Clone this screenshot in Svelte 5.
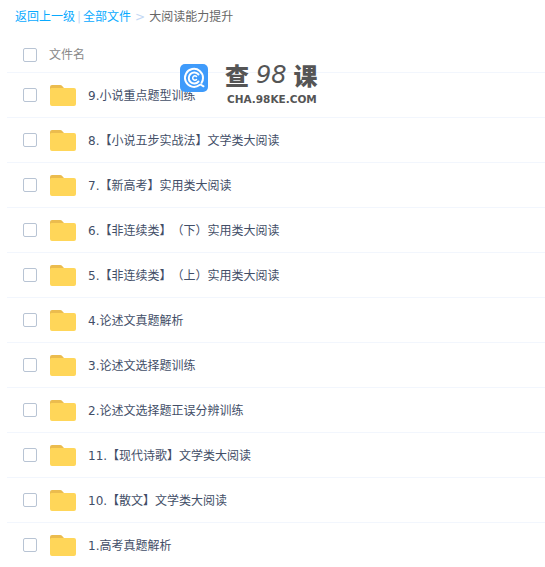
<script lang="ts">
	const rows = [
		'9.小说重点题型训练',
		'8.【小说五步实战法】文学类大阅读',
		'7.【新高考】实用类大阅读',
		'6.【非连续类】（下）实用类大阅读',
		'5.【非连续类】（上）实用类大阅读',
		'4.论述文真题解析',
		'3.论述文选择题训练',
		'2.论述文选择题正误分辨训练',
		'11.【现代诗歌】文学类大阅读',
		'10.【散文】文学类大阅读',
		'1.高考真题解析'
	];
</script>

<div class="page">
	<div class="crumbs">
		<a href="#back">返回上一级</a>
		<span class="bar">|</span>
		<a href="#all">全部文件</a>
		<span class="gt">&gt;</span>
		<span class="current">大阅读能力提升</span>
	</div>

	<div class="head">
		<span class="check"></span>
		<span class="head-name">文件名</span>
	</div>

	{#each rows as name}
		<div class="row">
			<span class="check"></span>
			<svg class="folder" viewBox="0 0 26 21" width="26" height="21">
				<path d="M0 2a2 2 0 0 1 2-2h8a3 3 0 0 1 2.400 1.200L14 3H2v2H0z" fill="#ebbc4e" />
				<path d="M1.500 3H24a2 2 0 0 1 2 2v14a2 2 0 0 1-2 2H2a2 2 0 0 1-2-2V4.500A1.500 1.500 0 0 1 1.500 3z" fill="#ffd659" />
			</svg>
			<span class="name">{name}</span>
		</div>
	{/each}

	<div class="mark">
		<svg class="logo" viewBox="0 0 28 28" width="28" height="28">
			<rect width="28" height="28" rx="5" fill="#3f9bfb" />
			<path d="M19.500 21A9 9 0 1 1 23 14c0 1.800-.5 3.400-1.400 4.800" fill="none" stroke="#fff" stroke-width="2" stroke-linecap="round" />
			<path d="M18.500 10.500a5.500 5.500 0 1 0 0 7" fill="none" stroke="#fff" stroke-width="2" stroke-linecap="round" />
			<path d="M16.500 12.500a2.200 2.200 0 1 0 0 3" fill="none" stroke="#fff" stroke-width="1.500" stroke-linecap="round" />
			<path d="M20.500 20.500l3 1.800" stroke="#fff" stroke-width="2" stroke-linecap="round" />
		</svg>
		<div class="brand">
			<div class="brand-cn"><span>查</span><i>98</i><span>课</span></div>
			<div class="brand-en">CHA.98KE.COM</div>
		</div>
	</div>
</div>

<style>
	:global(body) {
		margin: 0;
		background: #fff;
	}

	.page {
		position: relative;
		width: 545px;
		height: 567px;
		overflow: hidden;
		box-sizing: border-box;
		padding-left: 7px;
		font-family: 'DejaVu Sans', 'Noto Sans CJK SC', sans-serif;
		font-size: 12px;
		color: #424e67;
		text-spacing-trim: space-all;
	}

	.crumbs {
		height: 34px;
		line-height: 34px;
		padding-left: 8px;
		display: flex;
		white-space: nowrap;
	}

	.crumbs a {
		color: #09aaff;
		text-decoration: none;
	}

	.bar {
		color: #c4d8f4;
		margin: 0 2px;
	}

	.gt {
		color: #c4d8f4;
		margin: 0 4px;
	}

	.current {
		color: #666;
	}

	.head {
		height: 39px;
		display: flex;
		align-items: center;
		border-bottom: 1px solid #f2f6fd;
		box-sizing: border-box;
		padding: 4px 0 0 16px;
		color: #888;
	}

	.head-name {
		margin: -3px 0 0 12px;
	}

	.check {
		width: 12px;
		height: 12px;
		border: 1px solid #b8c4d4;
		border-radius: 2px;
		flex: none;
	}

	.row {
		height: 45px;
		display: flex;
		align-items: center;
		box-sizing: border-box;
		border-bottom: 1px solid #f2f6fd;
		padding-left: 16px;
	}

	.folder {
		margin-left: 13px;
		flex: none;
	}

	.name {
		margin-left: 12px;
		margin-top: -1px;
		white-space: nowrap;
	}

	.mark {
		position: absolute;
		left: 180px;
		top: 60px;
		display: flex;
		gap: 17px;
	}

	.logo {
		margin-top: 4px;
		flex: none;
	}

	.brand {
		color: #555;
	}

	.brand-cn {
		display: flex;
		align-items: center;
		gap: 7px;
		height: 30px;
		font-family: 'Noto Sans CJK SC', sans-serif;
		font-size: 24px;
		font-weight: 900;
		line-height: 30px;
	}

	.brand-cn i {
		font-family: 'DejaVu Sans', sans-serif;
		font-size: 24px;
		font-weight: 400;
	}

	.brand-en {
		font-family: 'DejaVu Sans', sans-serif;
		font-size: 10.5px;
		font-weight: 700;
		margin: 3px 0 0 2px;
		white-space: nowrap;
	}
</style>
